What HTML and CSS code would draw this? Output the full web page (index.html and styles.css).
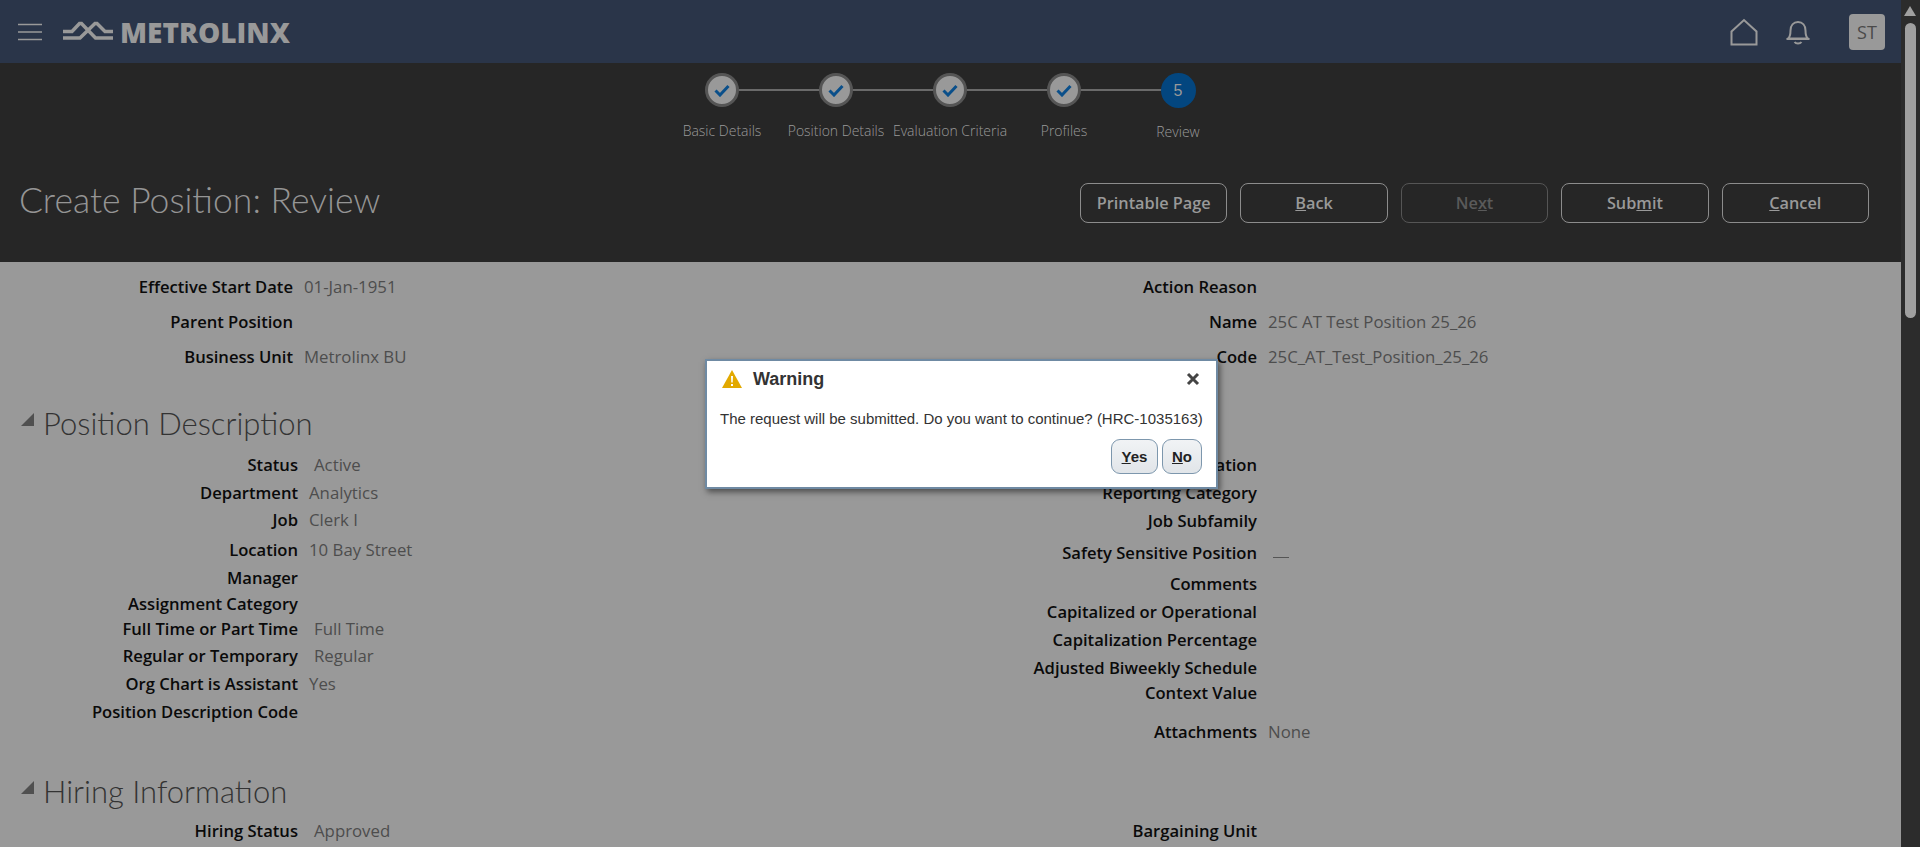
FILE: index.html
```html
<!DOCTYPE html>
<html lang="en">
<head>
    <meta charset="UTF-8">
    <meta name="viewport" content="width=device-width, initial-scale=1.0">
    <title>Create Position: Review</title>
    <link rel="stylesheet" href="styles.css">
</head>
<body>

    <div class="page">
        <header class="topbar">
            <div class="brand">
                <svg class="menu-icon" width="24" height="18" viewBox="0 0 24 18">
                    <path d="M0 1.500h24M0 9h24M0 16.500h24" stroke="#999" stroke-width="1.6" fill="none"/>
                </svg>
                <svg class="logo-mark" width="51" height="21" viewBox="0 0 51 21">
                    <path d="M1 10.500h9l7.500-8h2l14 14.500h18" stroke="#999" stroke-width="3.500" fill="none"/>
                    <path d="M1 17h17l15-14.500h2l8 8h8" stroke="#999" stroke-width="3.500" fill="none"/>
                </svg>
                <span class="logo-text">METROLINX</span>
            </div>
            <div class="top-actions">
                <svg width="28" height="28" viewBox="0 0 28 28">
                    <path d="M1.500 13.500 14 2 26.500 13.500V26.500H1.500Z" stroke="#999" stroke-width="2" fill="none"/>
                </svg>
                <svg class="bell" width="24" height="26" viewBox="0 0 24 26">
                    <path d="M2 19.500c2-1.500 2.500-3 2.500-8 0-5 3-8.500 7.500-8.500s7.500 3.500 7.500 8.500c0 5 .5 6.500 2.500 8ZM1 20h22M8.500 23c1.500 2 5.500 2 7 0" stroke="#999" stroke-width="2" fill="none"/>
                </svg>
                <div class="avatar">ST</div>
            </div>
        </header>

        <section class="train-band">
            <ol class="train">
                <li class="stop">
                    <span class="dot"><svg width="16" height="13" viewBox="0 0 16 13"><path d="M1.500 6.500 6 11 14.500 2" stroke="#0a4f8a" stroke-width="3" fill="none"/></svg></span>
                    <span class="stop-label">Basic Details</span>
                </li>
                <li class="stop">
                    <span class="dot"><svg width="16" height="13" viewBox="0 0 16 13"><path d="M1.500 6.500 6 11 14.500 2" stroke="#0a4f8a" stroke-width="3" fill="none"/></svg></span>
                    <span class="stop-label">Position Details</span>
                </li>
                <li class="stop">
                    <span class="dot"><svg width="16" height="13" viewBox="0 0 16 13"><path d="M1.500 6.500 6 11 14.500 2" stroke="#0a4f8a" stroke-width="3" fill="none"/></svg></span>
                    <span class="stop-label">Evaluation Criteria</span>
                </li>
                <li class="stop">
                    <span class="dot"><svg width="16" height="13" viewBox="0 0 16 13"><path d="M1.500 6.500 6 11 14.500 2" stroke="#0a4f8a" stroke-width="3" fill="none"/></svg></span>
                    <span class="stop-label">Profiles</span>
                </li>
                <li class="stop">
                    <span class="dot dot-current">5</span>
                    <span class="stop-label">Review</span>
                </li>
            </ol>
            <div class="title-row">
                <h1>Create Position: Review</h1>
                <div class="actions">
                    <button class="btn">Printable Page</button>
                    <button class="btn"><u>B</u>ack</button>
                    <button class="btn btn-off">Ne<u>x</u>t</button>
                    <button class="btn">Sub<u>m</u>it</button>
                    <button class="btn"><u>C</u>ancel</button>
                </div>
            </div>
        </section>

        <main class="content">
            <div class="columns">
                <dl class="fields fields-top">
                    <div class="row h35"><dt>Effective Start Date</dt><dd>01-Jan-1951</dd></div>
                    <div class="row h35"><dt>Parent Position</dt><dd></dd></div>
                    <div class="row h35"><dt>Business Unit</dt><dd>Metrolinx BU</dd></div>
                </dl>
                <dl class="fields">
                    <div class="row h35"><dt>Action Reason</dt><dd></dd></div>
                    <div class="row h35"><dt>Name</dt><dd>25C AT Test Position 25_26</dd></div>
                    <div class="row h35"><dt>Code</dt><dd>25C_AT_Test_Position_25_26</dd></div>
                </dl>
            </div>

            <h2 class="section-head first-head"><span class="twisty"></span>Position Description</h2>
            <div class="columns">
                <dl class="fields">
                    <div class="row h28"><dt>Status</dt><dd class="indent">Active</dd></div>
                    <div class="row h27"><dt>Department</dt><dd>Analytics</dd></div>
                    <div class="row h30"><dt>Job</dt><dd>Clerk I</dd></div>
                    <div class="row h28"><dt>Location</dt><dd>10 Bay Street</dd></div>
                    <div class="row h26"><dt>Manager</dt><dd></dd></div>
                    <div class="row h25"><dt>Assignment Category</dt><dd></dd></div>
                    <div class="row h27"><dt>Full Time or Part Time</dt><dd class="indent">Full Time</dd></div>
                    <div class="row h28"><dt>Regular or Temporary</dt><dd class="indent">Regular</dd></div>
                    <div class="row h28"><dt>Org Chart is Assistant</dt><dd>Yes</dd></div>
                    <div class="row h28"><dt>Position Description Code</dt><dd></dd></div>
                </dl>
                <dl class="fields">
                    <div class="row h28"><dt>Job Classification</dt><dd></dd></div>
                    <div class="row h28"><dt>Reporting Category</dt><dd></dd></div>
                    <div class="row h32"><dt>Job Subfamily</dt><dd></dd></div>
                    <div class="row h31"><dt>Safety Sensitive Position</dt><dd class="dash"><span></span></dd></div>
                    <div class="row h28"><dt>Comments</dt><dd></dd></div>
                    <div class="row h28"><dt>Capitalized or Operational</dt><dd></dd></div>
                    <div class="row h28"><dt>Capitalization Percentage</dt><dd></dd></div>
                    <div class="row h25"><dt>Adjusted Biweekly Schedule</dt><dd></dd></div>
                    <div class="row h39"><dt>Context Value</dt><dd></dd></div>
                    <div class="row h28"><dt>Attachments</dt><dd>None</dd></div>
                </dl>
            </div>

            <h2 class="section-head second-head"><span class="twisty"></span>Hiring Information</h2>
            <div class="columns">
                <dl class="fields">
                    <div class="row h28"><dt>Hiring Status</dt><dd class="indent">Approved</dd></div>
                </dl>
                <dl class="fields">
                    <div class="row h28"><dt>Bargaining Unit</dt><dd></dd></div>
                </dl>
            </div>
        </main>
    </div>

    <div class="scrollbar">
        <span class="scroll-up"></span>
        <span class="scroll-thumb"></span>
    </div>

    <div class="dialog">
        <div class="dialog-head">
            <svg width="20" height="18" viewBox="0 0 20 18">
                <path d="M10 0 20 18H0Z" fill="#e2a900"/>
                <path d="M9 6h2l-.3 6.500H9.300ZM9 14h2v2H9Z" fill="#fff"/>
            </svg>
            <span class="dialog-title">Warning</span>
            <svg class="dialog-close" width="14" height="14" viewBox="0 0 14 14">
                <path d="M2 2 12 12M12 2 2 12" stroke="#444" stroke-width="3" fill="none"/>
            </svg>
        </div>
        <p class="dialog-text">The request will be submitted. Do you want to continue? (HRC-1035163)</p>
        <div class="dialog-buttons">
            <button class="dlg-btn yes"><u>Y</u>es</button>
            <button class="dlg-btn no"><u>N</u>o</button>
        </div>
    </div>

</body>
</html>
```

FILE: styles.css
```css
/* Page */
html, body {
    margin: 0;
    padding: 0;
    height: 100%;
    overflow: hidden;
    background-color: #999999;
}

body {
    font-family: "Open Sans", "Noto Sans", Arial, sans-serif;
    font-size: 16.8px;
    position: relative;
}

.page {
    margin-right: 19px;
}

/* Top bar */
.topbar {
    height: 63px;
    background-color: #2a3549;
    display: flex;
    justify-content: space-between;
    align-items: center;
    padding: 0 16px 0 18px;
}

.brand {
    display: flex;
    align-items: center;
}

.menu-icon {
    margin-right: 20px;
}

.logo-mark {
    margin-right: 7px;
}

.logo-text {
    font-size: 28px;
    font-weight: 800;
    line-height: 30px;
    color: #999999;
}

.top-actions {
    display: flex;
    align-items: center;
}

.bell {
    margin-left: 28px;
}

.avatar {
    width: 36px;
    height: 36px;
    margin-left: 39px;
    border-radius: 4px;
    background-color: #999999;
    color: #4a4a4a;
    font-size: 18px;
    line-height: 36px;
    text-align: center;
}

/* Train stops */
.train-band {
    height: 199px;
    background-color: #262626;
}

.train {
    list-style: none;
    margin: 0;
    padding: 10px 0 0 665px;
    display: flex;
}

.stop {
    width: 114px;
    display: flex;
    flex-direction: column;
    align-items: center;
    position: relative;
}

.stop::after {
    content: "";
    position: absolute;
    top: 16px;
    left: 57px;
    width: 114px;
    height: 2px;
    background-color: #6a6a6a;
}

.stop:last-child::after {
    display: none;
}

.dot {
    width: 28px;
    height: 28px;
    border: 3px solid #555555;
    border-radius: 50%;
    background-color: #999999;
    display: flex;
    align-items: center;
    justify-content: center;
    position: relative;
    z-index: 1;
}

.dot-current {
    width: 35px;
    height: 35px;
    border: 0;
    background-color: #03467f;
    color: #999999;
    font-size: 16px;
    font-family: "Liberation Sans", Arial, sans-serif;
}

.stop-label {
    margin-top: 14px;
    font-weight: 300;
    font-size: 14px;
    line-height: 20px;
    white-space: nowrap;
    color: #9a9a9a;
}

.title-row {
    display: flex;
    justify-content: space-between;
    padding: 0 32px 0 19px;
    margin-top: 35px;
}

h1 {
    margin: 0;
    font-family: Lato, "Open Sans", sans-serif;
    font-size: 35.500px;
    font-weight: 300;
    line-height: 46px;
    color: #959595;
}

.actions {
    display: flex;
    gap: 13px;
    margin-top: 6px;
}

.btn {
    width: 147.400px;
    height: 40px;
    padding: 0;
    background-color: transparent;
    border: 1px solid #8c8c8c;
    border-radius: 8px;
    color: #999999;
    font-family: inherit;
    font-size: 16.300px;
    font-weight: 600;
}

.btn-off {
    color: #5a5a5a;
    border-color: #555555;
}

/* Form */
.content {
    padding-top: 13px;
    color: #000000;
}

.columns {
    display: flex;
}

.fields {
    margin: 0;
    width: 965px;
}

.fields + .fields {
    width: 900px;
}

.fields + .fields .row dt {
    width: 292px;
}

.fields-top .row dt {
    width: 293px;
}

.row {
    display: flex;
    align-items: flex-start;
    line-height: 24px;
}

.row dt {
    width: 298px;
    padding-right: 11px;
    text-align: right;
    white-space: nowrap;
    font-size: 16.600px;
    font-weight: 600;
    color: #0a0a0a;
}

.row dd {
    margin: 0;
    color: #4d4d4d;
    white-space: nowrap;
}

.row dd.indent {
    padding-left: 5px;
}

.dash span {
    display: block;
    width: 16px;
    height: 1px;
    margin: 16px 0 0 5px;
    background-color: #555555;
}

.h25 { height: 25px; }
.h26 { height: 26px; }
.h27 { height: 27px; }
.h28 { height: 28px; }
.h30 { height: 30px; }
.h31 { height: 31px; }
.h32 { height: 32px; }
.h35 { height: 35px; }
.h39 { height: 39px; }

.section-head {
    margin: 0;
    padding-left: 43px;
    font-family: Lato, "Open Sans", sans-serif;
    font-size: 31px;
    font-weight: 300;
    line-height: 44px;
    color: #333333;
    position: relative;
}

.first-head {
    margin-top: 21px;
    margin-bottom: 8px;
}

.second-head {
    margin-top: 21px;
    margin-bottom: 6px;
}

.twisty {
    position: absolute;
    left: 21px;
    top: 12px;
    width: 0;
    height: 0;
    border-left: 13px solid transparent;
    border-bottom: 13px solid #505050;
}

/* Scrollbar */
.scrollbar {
    position: absolute;
    top: 0;
    right: 0;
    bottom: 0;
    width: 19px;
    background-color: #2c2c2c;
}

.scroll-up {
    position: absolute;
    top: 6px;
    left: 3px;
    width: 0;
    height: 0;
    border-left: 6.500px solid transparent;
    border-right: 6.500px solid transparent;
    border-bottom: 10px solid #a0a0a0;
}

.scroll-thumb {
    position: absolute;
    top: 23px;
    left: 4px;
    width: 11px;
    height: 295px;
    border-radius: 5.500px;
    background-color: #a0a0a0;
}

/* Dialog */
.dialog {
    position: absolute;
    left: 705px;
    top: 359px;
    width: 513px;
    height: 130px;
    box-sizing: border-box;
    background-color: #ffffff;
    border: 2px solid #6f8aa3;
    box-shadow: 2px 3px 6px rgba(0, 0, 0, 0.5);
    font-family: "Liberation Sans", Arial, sans-serif;
}

.dialog-head {
    display: flex;
    align-items: center;
    height: 36px;
    padding: 0 16px 0 15px;
}

.dialog-title {
    margin-left: 11px;
    font-size: 18px;
    font-weight: 700;
    color: #333333;
    flex: 1;
}

.dialog-text {
    margin: 13px 0 0 13px;
    font-size: 15px;
    line-height: 17px;
    color: #333333;
    white-space: nowrap;
}

.dialog-buttons {
    display: flex;
    justify-content: flex-end;
    gap: 4px;
    margin-top: 12px;
    padding-right: 14px;
}

.dlg-btn {
    height: 35px;
    padding: 0;
    background: linear-gradient(#f1f3f5, #e1e5e9);
    border: 1px solid #7d97ad;
    border-radius: 9px;
    color: #222222;
    font-family: inherit;
    font-size: 15px;
    font-weight: 700;
}

.yes {
    width: 47px;
}

.no {
    width: 40px;
}
```
